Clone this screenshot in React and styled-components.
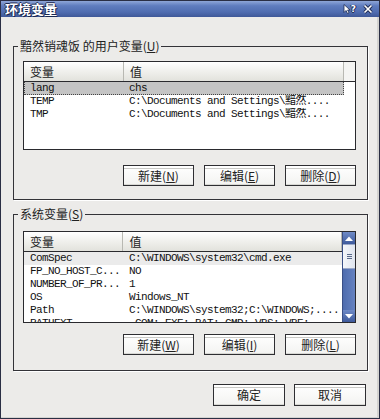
import React from 'react';
import styled, { createGlobalStyle } from 'styled-components';

const GlobalStyle = createGlobalStyle`
  html, body { margin: 0; padding: 0; background: #ecebe9; }
  body { font-family: "Noto Sans CJK SC", "Noto Sans", sans-serif; font-size: 12px; }
`;

const userVars = [
  ['lang', 'chs'],
  ['TEMP', 'C:\\Documents and Settings\\黯然....'],
  ['TMP', 'C:\\Documents and Settings\\黯然....'],
];

const sysVars = [
  ['ComSpec', 'C:\\WINDOWS\\system32\\cmd.exe'],
  ['FP_NO_HOST_C...', 'NO'],
  ['NUMBER_OF_PR...', '1'],
  ['OS', 'Windows_NT'],
  ['Path', 'C:\\WINDOWS\\system32;C:\\WINDOWS;....'],
  ['PATHEXT', '.COM;.EXE;.BAT;.CMD;.VBS;.VBE;...'],
];

const App = () => {
  return (
    <>
      <GlobalStyle />
      <Window>
        <TitleBar>
          <Title>环境变量</Title>
          <TitleIcon>
            <svg width="8" height="10" viewBox="0 0 8 10">
              <path d="M1 0.5 L1 8.5 L3 6.5 L4.5 9.5 L6 8.8 L4.6 6 L7 6 Z" fill="#fff" stroke="#1c2850" strokeWidth="0.8" />
            </svg>
            <Help>?</Help>
          </TitleIcon>
          <TitleIcon>
            <svg width="10" height="10" viewBox="0 0 10 10">
              <path d="M1.5 1.5 L8.5 8.5 M8.5 1.5 L1.5 8.5" stroke="#1c2850" strokeWidth="3.2" />
              <path d="M1.5 1.5 L8.5 8.5 M8.5 1.5 L1.5 8.5" stroke="#fff" strokeWidth="1.6" />
            </svg>
          </TitleIcon>
        </TitleBar>
        <Body>
          <Group $pt={8} $pb={13}>
            <Legend>黯然销魂饭 的用户变量(<u>U</u>)</Legend>
            <ListBox $h={89}>
              <ListContent>
                <Header>
                  <HeadCell $w={100}>变量</HeadCell>
                  <HeadCell $w={220}>值</HeadCell>
                  <HeadFill />
                </Header>
                {userVars.map(([k, v], i) => (
                  <Row key={k} $state={i === 0 ? 'focus' : ''}>
                    <NameCell>{k}</NameCell>
                    <ValueCell>{v}</ValueCell>
                  </Row>
                ))}
              </ListContent>
            </ListBox>
            <ButtonRow $mt={15}>
              <Button>新建(<u>N</u>)</Button>
              <Button>编辑(<u>E</u>)</Button>
              <Button>删除(<u>D</u>)</Button>
            </ButtonRow>
          </Group>
          <Group $pt={10} $pb={15} $mt={7}>
            <Legend>系统变量(<u>S</u>)</Legend>
            <ListBox $h={92}>
              <ListContent>
                <Header>
                  <HeadCell $w={100}>变量</HeadCell>
                  <HeadCell $w={220}>值</HeadCell>
                  <HeadFill />
                </Header>
                {sysVars.map(([k, v], i) => (
                  <Row key={k} $state={i === 0 ? 'soft' : ''}>
                    <NameCell>{k}</NameCell>
                    <ValueCell>{v}</ValueCell>
                  </Row>
                ))}
              </ListContent>
              <ScrollBar>
                <ScrollButton>
                  <svg width="8" height="5" viewBox="0 0 8 5"><path d="M0 5 L4 0.5 L8 5 Z" fill="#fff" /></svg>
                </ScrollButton>
                <Thumb>
                  <svg width="5" height="5" viewBox="0 0 5 5">
                    <path d="M0 0.5 H5 M0 2.5 H5 M0 4.5 H5" stroke="#5a6a8a" strokeWidth="1" />
                  </svg>
                </Thumb>
                <Track />
                <ScrollButton>
                  <svg width="8" height="5" viewBox="0 0 8 5"><path d="M0 0 L4 4.5 L8 0 Z" fill="#fff" /></svg>
                </ScrollButton>
              </ScrollBar>
            </ListBox>
            <ButtonRow $mt={11}>
              <Button>新建(<u>W</u>)</Button>
              <Button>编辑(<u>I</u>)</Button>
              <Button>删除(<u>L</u>)</Button>
            </ButtonRow>
          </Group>
          <Footer>
            <Button $w={72} $h={22}>确定</Button>
            <Button $w={72} $h={22}>取消</Button>
          </Footer>
        </Body>
      </Window>
    </>
  );
};

const Window = styled.div`
  width: 380px;
  height: 419px;
  box-sizing: border-box;
  border: 1px solid #2a2e44;
  box-shadow: inset -2px -1px 0 #d4d3d0;
  background: #ecebe9;
  display: flex;
  flex-direction: column;
`;

const TitleBar = styled.div`
  height: 16px;
  display: flex;
  align-items: center;
  gap: 7px;
  padding: 0 6px 0 4px;
  background: linear-gradient(#8ea6d8 0%, #5f7cbe 30%, #4f6cb0 70%, #3f5898 100%);
  color: #fff;
`;

const Title = styled.div`
  flex: 1;
  font-size: 13px;
  font-weight: bold;
  line-height: 16px;
  text-shadow: 1px 1px 0 #1c2850, -1px 0 0 #1c2850, 0 -1px 0 #1c2850;
`;

const TitleIcon = styled.div`
  display: flex;
  align-items: center;
  height: 12px;
`;

const Help = styled.span`
  font-family: "DejaVu Sans", sans-serif;
  font-size: 9px;
  font-weight: bold;
  line-height: 10px;
  color: #fff;
  text-shadow: 1px 0 0 #1c2850, -1px 0 0 #1c2850, 0 1px 0 #1c2850;
`;

const Body = styled.div`
  flex: 1;
  display: flex;
  flex-direction: column;
  padding: 22px 11px 0 12px;
`;

const Group = styled.fieldset`
  margin: ${p => p.$mt || 0}px 0 0 0;
  padding: ${p => p.$pt}px 11px ${p => p.$pb}px 9px;
  border: 1px solid #333338;
  box-shadow: 1px 1px 0 #fff;
  min-width: 0;
`;

const Legend = styled.legend`
  margin-left: -5px;
  padding: 0 2px;
  line-height: 14px;
  font-size: 12px;
  color: #222;
`;

const ListBox = styled.div`
  height: ${p => p.$h}px;
  box-sizing: border-box;
  border: 1px solid #2a2a2e;
  background: #fff;
  display: flex;
  overflow: hidden;
`;

const ListContent = styled.div`
  flex: 1;
  display: flex;
  flex-direction: column;
  min-width: 0;
`;

const Header = styled.div`
  display: flex;
  height: 20px;
  flex-shrink: 0;
  box-sizing: border-box;
  border-bottom: 1px solid #2a2a2e;
`;

const HeadCell = styled.div`
  width: ${p => p.$w}px;
  box-sizing: border-box;
  padding-left: 6px;
  line-height: 19px;
  font-size: 12px;
  color: #222;
  background: linear-gradient(#ffffff 0%, #f1f1ee 45%, #e2e2dc 100%);
  border-right: 1px solid #b8b8b2;
  box-shadow: inset 0 1px 0 #fff;
`;

const HeadFill = styled.div`
  flex: 1;
  background: #f4f4f2;
`;

const Row = styled.div`
  display: flex;
  width: 320px;
  height: 13px;
  flex-shrink: 0;
  box-sizing: border-box;
  font-family: "Liberation Mono", "Noto Sans CJK SC", monospace;
  font-size: 11px;
  letter-spacing: -0.6px;
  line-height: 12px;
  color: #111;
  white-space: nowrap;
  background: ${p => (p.$state === 'focus' ? '#c4c4c4' : p.$state === 'soft' ? '#ebebeb' : 'transparent')};
  border: 1px dotted ${p => (p.$state === 'focus' ? '#444' : 'transparent')};
  border-top: 0;
`;

const NameCell = styled.div`
  width: 100px;
  padding-left: 5px;
  box-sizing: border-box;
  overflow: hidden;
`;

const ValueCell = styled.div`
  flex: 1;
  padding-left: 4px;
  overflow: hidden;
`;

const ScrollBar = styled.div`
  width: 12px;
  display: flex;
  flex-direction: column;
  background: #5a77b6;
  border-left: 1px solid #3a4f86;
`;

const ScrollButton = styled.div`
  height: 12px;
  display: flex;
  align-items: center;
  justify-content: center;
  background: linear-gradient(#6f8ac6, #3e5a9c);
`;

const Thumb = styled.div`
  height: 23px;
  display: flex;
  align-items: center;
  justify-content: center;
  background: linear-gradient(90deg, #f4f6fa, #dfe4ee);
  border-top: 1px solid #9aa8c8;
  border-bottom: 1px solid #9aa8c8;
`;

const Track = styled.div`
  flex: 1;
  background: linear-gradient(90deg, #4e6cae, #6682c0);
`;

const ButtonRow = styled.div`
  display: flex;
  justify-content: flex-end;
  gap: 10px;
  margin-top: ${p => p.$mt}px;
`;

const Button = styled.button`
  width: ${p => p.$w || 71}px;
  height: ${p => p.$h || 21}px;
  padding: 0;
  border: 1px solid #2e2e32;
  background: linear-gradient(#ffffff, #f3f3f1);
  box-shadow: inset 0 2px 0 #fff, inset 0 3px 0 #c9c9c6, inset 0 -1px 0 #d8d8d4;
  font-family: "Noto Sans CJK SC", "Noto Sans", sans-serif;
  font-size: 12px;
  color: #222;
  line-height: 18px;
  u { text-underline-offset: 1px; }
`;

const Footer = styled.div`
  display: flex;
  justify-content: flex-end;
  gap: 9px;
  padding: 13px 2px 0 0;
`;

export default App;
